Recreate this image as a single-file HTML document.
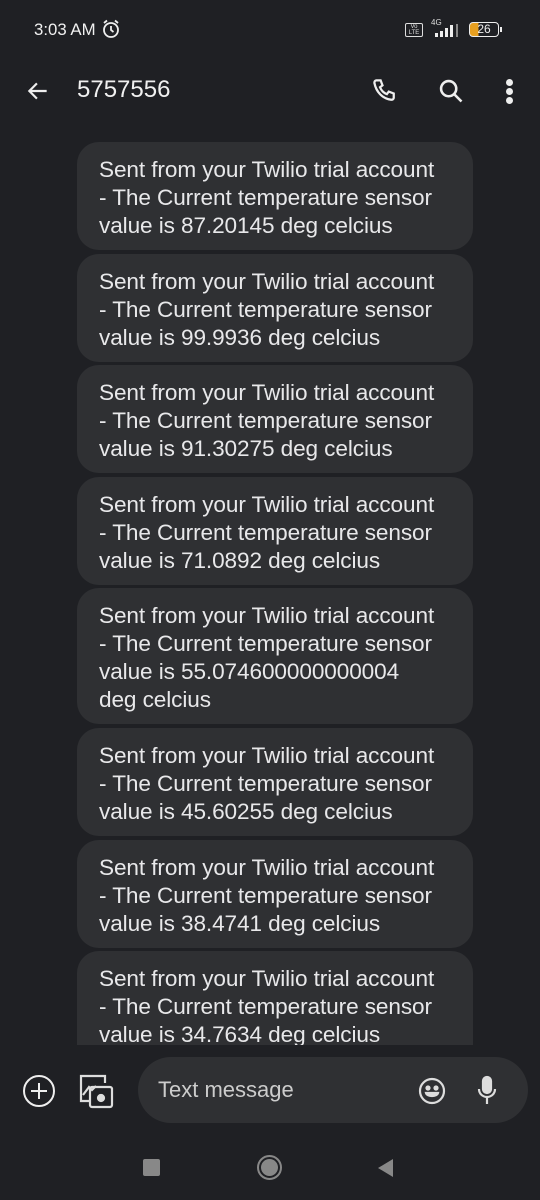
<!DOCTYPE html><html><head><style>
*{margin:0;padding:0;box-sizing:border-box}
body{width:540px;height:1200px;background:#1f2024;font-family:"Liberation Sans",sans-serif;color:#e6e6e8;position:relative;overflow:hidden}
.abs{position:absolute}
.b{position:absolute;left:77px;width:396px;background:#2f3033;border-radius:22px;padding:14px 0 0 22px;font-size:22.6px;line-height:28px;color:#e8e8ea;letter-spacing:-0.1px;white-space:nowrap}
</style></head><body>
<div class="abs" style="left:34px;top:20px;font-size:16.8px;color:#f0f0f0">3:03 AM</div>
<svg class="abs" style="left:101px;top:19px" width="20" height="20" viewBox="0 0 20 20" fill="none" stroke="#eee" stroke-width="1.8"><circle cx="10" cy="11" r="7"/><path d="M10 7v4l2.5 2M3 4l3-2.5M17 4l-3-2.5"/></svg>
<div class="abs" style="left:405px;top:23px;width:18px;height:14px;border:1px solid #ddd;border-radius:2px;font-size:6px;line-height:6px;text-align:center;color:#ddd">Vo<br>LTE</div>
<div class="abs" style="left:431px;top:18px;font-size:8px;color:#ddd">4G</div>
<svg class="abs" style="left:427px;top:24px" width="34" height="14" viewBox="0 0 34 14"><g fill="#eee"><rect x="8" y="9" width="3" height="4"/><rect x="13" y="7" width="3" height="6"/><rect x="18" y="4" width="3" height="9"/><rect x="23" y="1" width="3" height="12"/></g><rect x="29" y="0" width="2" height="13" fill="#888"/></svg>
<div class="abs" style="left:469px;top:22px;width:30px;height:15px;border:1.5px solid #eee;border-radius:4px;font-size:12px;line-height:12px;color:#eee;text-align:center;background:linear-gradient(90deg,#e8a020 0 30%,transparent 30%)">26</div>
<div class="abs" style="left:500px;top:27px;width:2px;height:5px;background:#eee"></div>
<svg class="abs" style="left:25px;top:78px" width="26" height="26" viewBox="0 0 24 24" fill="none" stroke="#eee" stroke-width="2"><path d="M20 12H5M11 5l-7 7 7 7"/></svg>
<div class="abs" style="left:77px;top:76px;font-size:24px;color:#f0f0f0">5757556</div>
<svg class="abs" style="left:370px;top:76px" width="30" height="30" viewBox="0 0 24 24" fill="none" stroke="#eee" stroke-width="1.8"><path d="M5 3.5l3.5 0 1.5 4-2 1.5c1 2.5 3 4.5 5.5 5.5l1.5-2 4 1.5v3.5c0 1-1 1.5-2 1.5C10 18 5 13 3.5 5.5 3.5 4.5 4 3.5 5 3.5z"/></svg>
<svg class="abs" style="left:437px;top:77px" width="28" height="28" viewBox="0 0 24 24" fill="none" stroke="#eee" stroke-width="2.2"><circle cx="10" cy="10" r="6.5"/><path d="M15 15l6 6"/></svg>
<div class="abs" style="left:506px;top:79px;width:7px;height:7px;border-radius:50%;background:#eee;box-shadow:0 9px 0 #eee,0 18px 0 #eee"></div>

<div class="b" style="top:142px;height:108px">Sent from your Twilio trial account<br>- The Current temperature sensor<br>value is 87.20145 deg celcius</div>
<div class="b" style="top:254px;height:108px">Sent from your Twilio trial account<br>- The Current temperature sensor<br>value is 99.9936 deg celcius</div>
<div class="b" style="top:365px;height:108px">Sent from your Twilio trial account<br>- The Current temperature sensor<br>value is 91.30275 deg celcius</div>
<div class="b" style="top:477px;height:108px">Sent from your Twilio trial account<br>- The Current temperature sensor<br>value is 71.0892 deg celcius</div>
<div class="b" style="top:588px;height:136px">Sent from your Twilio trial account<br>- The Current temperature sensor<br>value is 55.074600000000004<br>deg celcius</div>
<div class="b" style="top:728px;height:108px">Sent from your Twilio trial account<br>- The Current temperature sensor<br>value is 45.60255 deg celcius</div>
<div class="b" style="top:840px;height:108px">Sent from your Twilio trial account<br>- The Current temperature sensor<br>value is 38.4741 deg celcius</div>
<div class="b" style="top:951px;height:120px">Sent from your Twilio trial account<br>- The Current temperature sensor<br>value is 34.7634 deg celcius</div>
<div class="abs" style="left:0;top:1045px;width:540px;height:155px;background:#1f2024"></div>

<svg class="abs" style="left:22px;top:1074px" width="34" height="34" viewBox="0 0 34 34" fill="none" stroke="#eee" stroke-width="2"><circle cx="17" cy="17" r="15"/><path d="M17 9v16M9 17h16"/></svg>
<svg class="abs" style="left:78px;top:1073px" width="36" height="36" viewBox="0 0 36 36" fill="none" stroke="#ddd" stroke-width="2.2"><path d="M12 28H3V3h24v7"/><path d="M5 22l6-8 3 3 4-4"/><rect x="12" y="14" width="22" height="20" rx="2"/><circle cx="23" cy="25" r="3" fill="#ddd"/></svg>
<div class="abs" style="left:138px;top:1057px;width:390px;height:66px;border-radius:33px;background:#2f3033"></div>
<div class="abs" style="left:158px;top:1077px;font-size:22px;color:#ccc">Text message</div>
<svg class="abs" style="left:418px;top:1077px" width="28" height="28" viewBox="0 0 28 28" fill="none" stroke="#ddd" stroke-width="2.2"><circle cx="14" cy="14" r="12"/><circle cx="10" cy="11" r="1.5" fill="#ddd"/><circle cx="18" cy="11" r="1.5" fill="#ddd"/><path d="M8 16h12c-1 4-11 4-12 0z" fill="#ddd"/></svg>
<svg class="abs" style="left:476px;top:1075px" width="22" height="32" viewBox="0 0 22 32" fill="none" stroke="#ddd" stroke-width="2.2"><rect x="7" y="2" width="8" height="16" rx="4" fill="#ddd"/><path d="M3 14c0 5 4 8 8 8s8-3 8-8M11 22v7"/></svg>
<div class="abs" style="left:143px;top:1159px;width:17px;height:17px;background:#888;border-radius:2px"></div>
<div class="abs" style="left:257px;top:1155px;width:25px;height:25px;border-radius:50%;border:2.5px solid #888;padding:2px"><div style="width:100%;height:100%;border-radius:50%;background:#888"></div></div>
<svg class="abs" style="left:376px;top:1158px" width="18" height="20" viewBox="0 0 18 20"><path d="M17 1L2 10l15 9z" fill="#888"/></svg>
</body></html>
